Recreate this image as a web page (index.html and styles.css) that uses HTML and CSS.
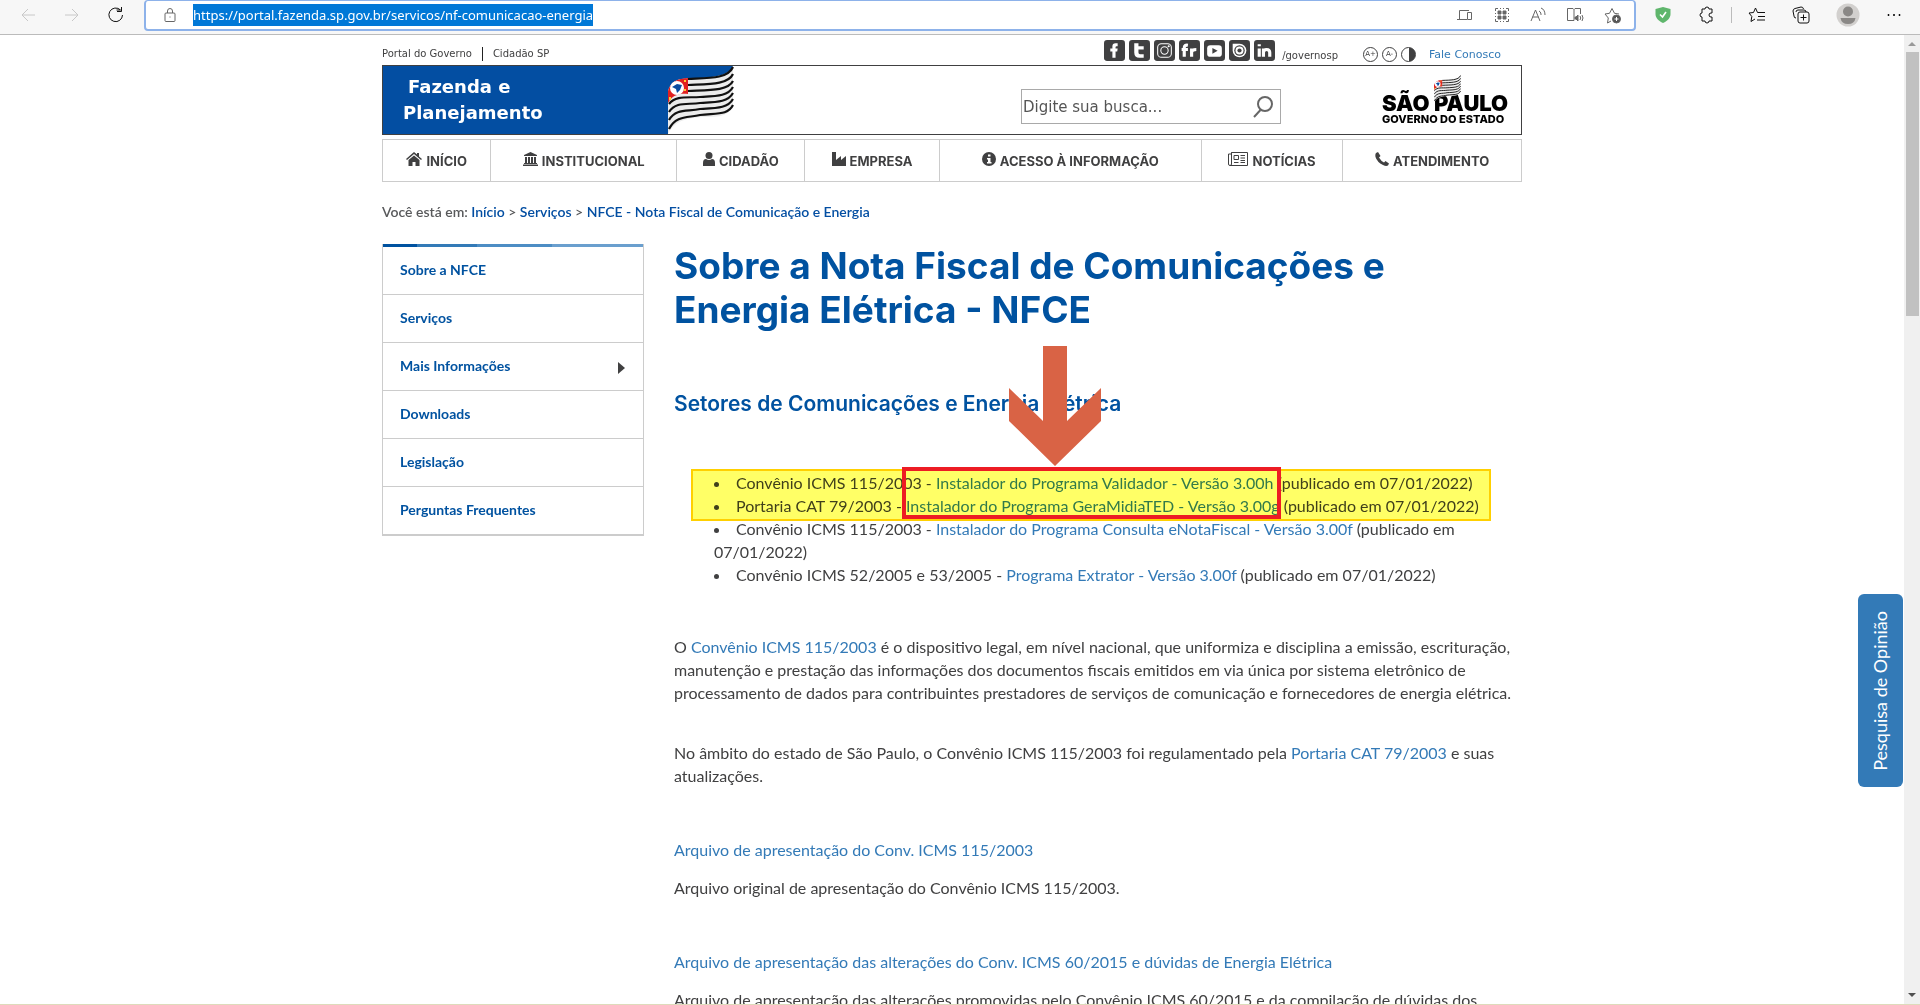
FILE: index.html
```html
<!DOCTYPE html>
<html lang="pt-BR">
<head>
<meta charset="utf-8">
<title>NFCE - Nota Fiscal de Comunicação e Energia</title>
<link rel="stylesheet" href="styles.css">
</head>
<body>
<svg class="defs" width="0" height="0" aria-hidden="true">
  <symbol id="flag" viewBox="0 0 66 68">
    <path d="M0 25C5 9 20 13 35 12 50 11 62 8 65 0V40C58 55 42 49 25 52 10 54 4 60 0 68Z" fill="#ececec"/>
    <g fill="none" stroke="#111" stroke-width="2.200">
      <path d="M20 13C40 12 60 13 65 1"/><path d="M20 19C40 18 60 19 65 8"/><path d="M20 25C40 24 60 25 65 15"/>
      <path d="M1 38C8 29 20 32 32 31 50 30 60 30 65 21"/><path d="M1 46C8 35 20 39 32 37 50 36 60 36 65 27"/>
      <path d="M1 54C8 42 20 46 32 43 50 42 60 42 65 33"/><path d="M1 63C8 49 20 52 32 49 50 47 60 49 65 39"/>
    </g>
    <path d="M0 37V25C4 13 12 13 20 12V28C12 27 4 29 0 37Z" fill="#e02020"/>
    <circle cx="9" cy="22" r="7" fill="#fff"/><path d="M4 21l5-3 5 1-2 5-3 3-1-4z" fill="#0a4ba0"/>
    <path d="M16 14h2v2h-2zM16 23h2v2h-2zM1 31h2v3H1z" fill="#fc3"/>
  </symbol>
</svg>

<header class="browser">
  <div class="nav-buttons">
    <button aria-label="Voltar" disabled><svg width="18" height="18" viewBox="0 0 18 18"><path d="M16 9H3M9 3L3 9l6 6"/></svg></button>
    <button aria-label="Avançar" disabled><svg width="18" height="18" viewBox="0 0 18 18"><path d="M2 9h13M9 3l6 6-6 6"/></svg></button>
    <button aria-label="Atualizar"><svg width="18" height="18" viewBox="0 0 18 18"><path d="M15.500 9a6.800 6.800 0 1 1-2-5H9.500M14.500 1v4.500H10"/></svg></button>
  </div>
  <div class="address">
    <svg class="lock" width="14" height="16" viewBox="0 0 14 16"><rect x="2" y="6" width="10" height="8.500" rx="1"/><path d="M4.500 6V4a2.500 2.500 0 0 1 5 0v2M6.500 10h1"/></svg>
    <div class="url-field"><span class="url">https://portal.fazenda.sp.gov.br/servicos/nf-comunicacao-energia</span></div>
    <div class="address-tools">
      <button aria-label="Enviar para dispositivos"><svg width="18" height="16" viewBox="0 0 18 16"><path d="M13 3.500H3.500V12M1 12.500h10M11.500 5.500h4v7h-4z"/></svg></button>
      <button aria-label="Código QR"><svg width="16" height="16" viewBox="0 0 16 16"><path d="M1.500 4V1.500H4M12 1.500h2.500V4M14.500 12v2.500H12M4 14.500H1.500V12M6 1.500h1M9 1.500h1M6 14.500h1M9 14.500h1M1.500 6v1M1.500 9v1M14.500 6v1M14.500 9v1"/><path d="M4 4h3v3H4zM9 4h3v3H9zM4 9h3v3H4zM9 9h3v3H9z" fill="#666"/></svg></button>
      <button aria-label="Ler em voz alta"><svg width="16" height="16" viewBox="0 0 16 16"><path d="M1 14L5.500 3 10 14M2.500 10h6M9 4c2 1 2 3 2 4M11 1c3 1 4 4 4 7"/></svg></button>
      <button aria-label="Leitor imersivo"><svg width="18" height="16" viewBox="0 0 18 16"><path d="M8 13.500H1.500v-12H7l1 1v11M8 2.500l1-1h5.500V7"/><path d="M9 10h1l2-2v6l-2-2H9z" fill="#666"/><path d="M14 9q1.500 2 0 4M16 8q2 3 0 6"/></svg></button>
      <button aria-label="Adicionar aos favoritos"><svg width="18" height="17" viewBox="0 0 18 17"><path d="M7 14l-3.500 2 .8-5L1 7l4.500-.7L8 1.500l2.500 4.800L15 7"/><circle cx="12.500" cy="12" r="4" fill="#555"/><path d="M10.500 12h4M12.500 10v4" stroke="#fff"/></svg></button>
    </div>
  </div>
  <div class="extensions">
    <button aria-label="Proteção"><svg width="16" height="16" viewBox="0 0 16 16"><path d="M8 0l7.500 2v5c0 4-3 7-7.500 9C3.500 14 .5 11 .5 7V2z" fill="#5fb66c" stroke="none"/><path d="M5 7.500l2.500 2.500L11 5" stroke="#fff" stroke-width="1.600"/></svg></button>
    <button aria-label="Extensões"><svg width="18" height="18" viewBox="0 0 18 18"><path d="M5 3h3a2 2 0 0 1 4 0h3v4h-1a2 2 0 0 0 0 4h1v4h-3a2 2 0 0 1-4 0H5v-4a2 2 0 0 1 0-4z"/></svg></button>
    <span class="divider"></span>
    <button aria-label="Favoritos"><svg width="18" height="18" viewBox="0 0 18 18"><path d="M7 13l-4 2.500.8-5L1 7l4.500-.5L7.500 2l2 4.500h7.500M10 10.500h7M9 14h8"/></svg></button>
    <button aria-label="Coleções"><svg width="18" height="18" viewBox="0 0 18 18"><path d="M4 12q-2 0-2-2L1 5q0-2 2-2.500L9 1q2-.2 2.500 2M4 6q0-2 2-2h6q2 0 2 2"/><rect x="6" y="6" width="11" height="11" rx="2"/><path d="M11.500 8.500v6M8.500 11.500h6"/></svg></button>
    <button aria-label="Perfil"><svg width="24" height="24" viewBox="0 0 24 24"><circle cx="12" cy="12" r="11.500" fill="#d2d0ce" stroke="none"/><circle cx="12" cy="8.500" r="5" fill="#8a8886" stroke="none"/><path d="M4.500 15h15q-1 6-7.500 6t-7.500-6" fill="#8a8886" stroke="none"/></svg></button>
    <button aria-label="Mais opções"><svg width="16" height="6" viewBox="0 0 16 6"><path d="M2 2.500h1v1H2zM7.500 2.500h1v1h-1zM13 2.500h1v1h-1z" fill="#111"/></svg></button>
  </div>
</header>

<div class="viewport">
<div class="page">
<div class="container">
  <div class="topbar">
    <nav class="gov-links"><a href="#">Portal do Governo</a><span class="bar"></span><a href="#">Cidadão SP</a></nav>
    <div class="social">
      <a href="#" aria-label="Facebook"><svg viewBox="0 0 20 20"><rect width="20" height="20" rx="3"/><path class="w" d="M8 17v-6H6V8h2V6q0-3 3-3h2v3h-1q-1 0-1 1v1h2l-.4 3H11v6z"/></svg></a>
      <a href="#" aria-label="Twitter"><svg viewBox="0 0 20 20"><rect width="20" height="20" rx="3"/><path class="w" d="M5 3h4v3h5v3H9v3q0 1.500 1.500 1.500H14V17h-4q-5 0-5-5z"/></svg></a>
      <a href="#" aria-label="Instagram"><svg viewBox="0 0 20 20"><rect width="20" height="20" rx="3"/><rect class="o" x="3.500" y="3.500" width="13" height="13" rx="3.500"/><circle class="o" cx="10" cy="10" r="3.500"/><circle class="w" cx="14" cy="6" r="1"/></svg></a>
      <a href="#" aria-label="Flickr"><svg viewBox="0 0 20 20"><rect width="20" height="20" rx="3"/><path class="o thick" d="M5 16V7.500Q5 4.500 8.500 5M2.500 9h6M12 16V8M12 12q0-3 4.500-3"/></svg></a>
      <a href="#" aria-label="YouTube"><svg viewBox="0 0 20 20"><rect width="20" height="20" rx="3"/><rect class="w" x="3" y="5" width="14" height="11" rx="3"/><path d="M8 7.500v5.500l5-2.700z"/></svg></a>
      <a href="#" aria-label="Issuu"><svg viewBox="0 0 20 20"><rect width="20" height="20" rx="3"/><path class="w" d="M3.500 3.500H10a6.500 6.500 0 1 1-6.500 6.500z"/><circle cx="10" cy="10" r="5"/><circle class="w" cx="10" cy="10" r="3.800"/><circle cx="10" cy="10" r="2"/></svg></a>
      <a href="#" aria-label="LinkedIn"><svg viewBox="0 0 20 20"><rect width="20" height="20" rx="3"/><path class="o thick" d="M5 8v8M9 8v8M9 12q0-3 3-3t3 3v4M5 4v2"/></svg></a>
      <span>/governosp</span>
    </div>
    <div class="access">
      <button aria-label="Aumentar texto">A+</button><button aria-label="Diminuir texto">A-</button><button class="contrast" aria-label="Contraste"></button>
    </div>
    <a class="contact" href="#">Fale Conosco</a>
  </div>

  <div class="banner">
    <div class="brand"><span>Fazenda e</span><span>Planejamento</span></div>
    <svg class="brand-flag" width="66" height="69" viewBox="0 0 66 69"><path d="M0 0H65Q64 14 40 13L12 15Q2 18 0 28Z" fill="#034ea2"/><use href="#flag" width="66" height="68"/></svg>
    <form class="search">
      <input type="text" aria-label="Busca" placeholder="Digite sua busca...">
      <button type="button" aria-label="Buscar"><svg width="20" height="22" viewBox="0 0 20 22"><circle cx="12" cy="8" r="7"/><path d="M7.500 14L1 21"/></svg></button>
    </form>
    <div class="sp-logo"><b>SÃO PAULO</b><strong>GOVERNO DO ESTADO</strong><svg class="logo-flag" width="27" height="28"><use href="#flag"/></svg></div>
  </div>

  <nav class="menu">
    <a href="#"><svg width="16" height="14" viewBox="0 0 16 14"><path d="M0 7l8-7 3 2.600V1h2v3.400L16 7l-1 1-7-6-7 6zM2.500 8L8 3.500 13.500 8v6H9.500v-4h-3v4h-4z"/></svg>INÍCIO</a>
    <a href="#"><svg width="15" height="14" viewBox="0 0 15 14"><path d="M7.500 0L14 3v1H1V3zM2 5h2v6H2zM5 5h2v6H5zM8 5h2v6H8zM11 5h2v6h-2zM1 11h13v1H1zM0 12.500h15V14H0z"/></svg>INSTITUCIONAL</a>
    <a href="#"><svg width="12" height="14" viewBox="0 0 12 14"><circle cx="6" cy="3.500" r="3.500"/><path d="M0 14v-3q0-4 3-4 3 2 6 0 3 0 3 4v3z"/></svg>CIDADÃO</a>
    <a href="#"><svg width="14" height="14" viewBox="0 0 14 14"><path d="M0 14V0h4v8l5-4v4l5-4v10z"/></svg>EMPRESA</a>
    <a href="#"><svg width="14" height="14" viewBox="0 0 14 14"><circle cx="7" cy="7" r="7"/><path d="M6 2.500h2.500v2H6zM5 6h3.500v4h1v1.500H5V10h1V7.500H5z" fill="#fff"/></svg>ACESSO À INFORMAÇÃO</a>
    <a href="#"><svg width="20" height="14" viewBox="0 0 20 14"><path d="M3.500.5h16v13H2Q.5 13.500.5 12V2H3.500zV12q0 1.500-1.500 1.500M6 3.500h4.500v4H6zM12.500 3.500H17M12.500 6H17M12.500 8.500H17M6 10.500h4.500M12.500 10.500H17" fill="none" stroke="#404041"/></svg>NOTÍCIAS</a>
    <a href="#"><svg width="14" height="14" viewBox="0 0 14 14"><path d="M1 1L3 0 5.500 4 4 5.500Q6 9 9 10.500L10.500 9 14 11.500 13 13.500Q11 14.500 8 13 2 10 .5 5 0 2 1 1"/></svg>ATENDIMENTO</a>
  </nav>

  <nav class="crumbs">Você está em: <a href="#">Início</a> &gt; <a href="#">Serviços</a> &gt; <a href="#">NFCE - Nota Fiscal de Comunicação e Energia</a></nav>

  <div class="columns">
    <nav class="sidebar">
      <a href="#">Sobre a NFCE</a><a href="#">Serviços</a><a class="has-sub" href="#">Mais Informações</a><a href="#">Downloads</a><a href="#">Legislação</a><a href="#">Perguntas Frequentes</a>
    </nav>
    <main>
      <h1>Sobre a Nota Fiscal de Comunicações e Energia Elétrica - NFCE</h1>
      <h2>Setores de Comunicações e Energia Elétrica</h2>
      <div class="downloads">
        <ul>
          <li>Convênio ICMS 115/2003 - <a href="#">Instalador do Programa Validador - Versão 3.00h</a> (publicado em 07/01/2022)</li>
          <li>Portaria CAT 79/2003 - <a href="#">Instalador do Programa GeraMidiaTED - Versão 3.00g</a> (publicado em 07/01/2022)</li>
          <li>Convênio ICMS 115/2003 - <a href="#">Instalador do Programa Consulta eNotaFiscal - Versão 3.00f</a> (publicado em 07/01/2022)</li>
          <li>Convênio ICMS 52/2005 e 53/2005 - <a href="#">Programa Extrator - Versão 3.00f</a> (publicado em 07/01/2022)</li>
        </ul>
        <div class="highlight"></div>
        <div class="frame"></div>
        <svg class="arrow" width="94" height="120" viewBox="0 0 94 120"><path d="M35 0H59V75L93 42V75L47 120 1 75V42L35 75Z" fill="#d96345"/></svg>
      </div>
      <p>O <a href="#">Convênio ICMS 115/2003</a> é o dispositivo legal, em nível nacional, que uniformiza e disciplina a emissão, escrituração, manutenção e prestação das informações dos documentos fiscais emitidos em via única por sistema eletrônico de processamento de dados para contribuintes prestadores de serviços de comunicação e fornecedores de energia elétrica.</p>
      <p>No âmbito do estado de São Paulo, o Convênio ICMS 115/2003 foi regulamentado pela <a href="#">Portaria CAT 79/2003</a> e suas atualizações.</p>
      <section>
        <a href="#">Arquivo de apresentação do Conv. ICMS 115/2003</a>
        <span>Arquivo original de apresentação do Convênio ICMS 115/2003.</span>
      </section>
      <section>
        <a href="#">Arquivo de apresentação das alterações do Conv. ICMS 60/2015 e dúvidas de Energia Elétrica</a>
        <span>Arquivo de apresentação das alterações promovidas pelo Convênio ICMS 60/2015 e da compilação de dúvidas dos</span>
      </section>
    </main>
  </div>
</div>
<button class="survey">Pesquisa de Opinião</button>
</div>
<div class="scrollbar"><span class="up"></span><span class="thumb"></span><span class="down"></span></div>
</div>
</body>
</html>
```
FILE: styles.css
```css
* { box-sizing: border-box; }
body {
  margin: 0;
  height: 100vh;
  display: flex;
  flex-direction: column;
  overflow: hidden;
  background: #fff;
  color: #404041;
  font: 16px/23px Lato, "Open Sans", sans-serif;
}
a { color: #337ab7; text-decoration: none; }
button { padding: 0; border: 0; background: none; color: inherit; font: inherit; }
.defs { position: absolute; }

/* browser toolbar */
.browser {
  flex: none;
  display: flex;
  height: 35px;
  background: #f7f7f7;
  border-bottom: 1px solid #bbb;
}
.browser svg { display: block; fill: none; stroke: #111; }
.nav-buttons { display: flex; align-items: center; gap: 26px; width: 144px; padding: 0 0 4px 19px; }
.nav-buttons button:disabled svg { stroke: #c8c8c8; }
.address {
  flex: 1;
  display: flex;
  align-items: center;
  height: 31px;
  padding: 0 12px 0 17px;
  background: #fff;
  border: 2px solid #8db2ea;
  border-top-width: 1px;
  border-radius: 4px;
}
.address svg { stroke: #666; }
.url-field { flex: 1; padding-left: 16px; font: 13px/22px "Noto Sans", sans-serif; }
.url { display: inline-block; color: #fff; background: #0078d7; }
.address-tools { display: flex; gap: 20px; }
.extensions { display: flex; align-items: center; gap: 26px; width: 284px; padding: 0 0 4px 19px; }
.divider { width: 1px; height: 16px; margin: 0 -10px; background: #bbb; }

/* document area */
.viewport { flex: 1; min-height: 0; display: flex; border-bottom: 1px solid #dedbbb; }
.page { flex: 1; position: relative; overflow: hidden; }
.container { max-width: 1140px; margin: 0 auto; }
.topbar {
  display: flex;
  align-items: center;
  height: 30px;
  padding-right: 21px;
  font: 10px/14px "DejaVu Sans", sans-serif;
}
.gov-links { flex: 1; display: flex; align-items: center; padding-top: 8px; }
.gov-links a { color: #404041; }
.bar { width: 1px; height: 14px; margin: 0 10px; background: #222; }
.social { display: flex; gap: 4px; align-items: flex-end; }
.social svg { display: block; width: 21px; height: 21px; fill: #404041; }
.social .w { fill: #fff; }
.social .o { fill: none; stroke: #fff; }
.social .thick { stroke-width: 3; }
.social span { padding-left: 3px; margin-bottom: -2px; }
.access { display: flex; gap: 4px; padding: 8px 13px 0 25px; }
.access button { width: 15px; height: 15px; border: 1px solid #404041; border-radius: 50%; font-size: 7px; line-height: 12px; }
.access .contrast { background: linear-gradient(90deg, #fff 50%, #404041 50%); }
.contact { padding-top: 10px; font-size: 11px; }

.banner { position: relative; display: flex; align-items: center; height: 70px; border: 1px solid #404041; }
.brand {
  align-self: stretch;
  flex: none;
  width: 285px;
  padding: 8px 20px;
  background: #034ea2;
  color: #fff;
  font: bold 18px/26px "DejaVu Sans", sans-serif;
}
.brand span { display: block; }
.brand span:first-child { padding-left: 5px; }
.brand-flag { flex: none; }
.search { display: flex; align-items: center; width: 260px; height: 35px; margin: 13px 101px 0 auto; border: 1px solid #a9a9a9; }
.search input { flex: 1; min-width: 0; padding: 0 1px; border: 0; outline: 0; color: #444; font: 15px/20px "DejaVu Sans", sans-serif; }
.search input::placeholder { color: #555; }
.search button { width: 34px; height: 22px; }
.search svg { fill: none; stroke: #666; stroke-width: 2; }
.sp-logo { position: relative; width: 125px; margin-right: 14px; padding-top: 18px; color: #000; }
.sp-logo b, .sp-logo strong { display: block; white-space: nowrap; font-family: Inter, sans-serif; }
.sp-logo b { font-size: 22px; line-height: 20px; font-weight: 900; }
.sp-logo strong { font-size: 11px; line-height: 12px; font-weight: 800; }
.logo-flag { position: absolute; left: 52px; top: 0; }

.menu { display: flex; height: 43px; margin-top: 4px; border: 1px solid #ccc; }
.menu a {
  flex: 108 1 0;
  display: flex;
  align-items: center;
  justify-content: center;
  gap: 4px;
  border-left: 1px solid #ccc;
  color: #404041;
  font: 700 13px/20px Inter, sans-serif;
}
.menu a:first-child { border-left: 0; }
.menu a:nth-child(2) { flex-grow: 186; }
.menu a:nth-child(3) { flex-grow: 128; }
.menu a:nth-child(4) { flex-grow: 134; }
.menu a:nth-child(5) { flex-grow: 263; }
.menu a:nth-child(6) { flex-grow: 141; }
.menu a:nth-child(7) { flex-grow: 179; }
.menu svg { flex: none; fill: #404041; margin-bottom: 4px; }

.crumbs { padding-top: 18px; font-size: 14px; line-height: 24px; font-weight: 600; color: #58595b; }
.crumbs a { color: #034ea2; }

.columns { display: flex; gap: 30px; padding-top: 20px; }
.sidebar {
  align-self: flex-start;
  flex: none;
  width: 262px;
  border: 1px solid #ccc;
  border-top: 0;
  border-bottom-width: 2px;
}
.sidebar::before {
  content: "";
  display: block;
  height: 3px;
  background: linear-gradient(90deg, #0052a0 0 13%, #337ab7 13% 36%, #4d8dc4 36% 65%, #6a9fce 65%);
}
.sidebar a { display: block; height: 48px; padding-left: 17px; border-bottom: 1px solid #ccc; color: #0052a0; font-weight: bold; font-size: 14px; line-height: 46px; }
.sidebar a:last-child { height: 47px; border-bottom: 0; }
.has-sub { position: relative; }
.has-sub::after {
  content: "";
  position: absolute;
  right: 18px;
  top: 19px;
  border-left: 7px solid #404041;
  border-top: 6px solid transparent;
  border-bottom: 6px solid transparent;
}

main { flex: 1; min-width: 0; }
h1, h2 { margin: 0; color: #0052a0; font-family: Inter, sans-serif; font-weight: 700; }
h1 { max-width: 760px; font-size: 37px; line-height: 44px; }
h2 { margin: 60px 0 55px; font-size: 21px; line-height: 24px; font-weight: 600; }
main p { margin: 0 0 37px; }
.downloads { position: relative; margin-bottom: 49px; }
.downloads ul { margin: 0; padding-left: 40px; list-style-position: inside; }
.highlight { position: absolute; left: 17px; top: -2px; width: 800px; height: 52px; background: #ffff66; border: 2px solid #ffd000; mix-blend-mode: multiply; }
.frame { position: absolute; left: 228px; top: -4px; width: 379px; height: 52px; border: 4px solid #ed1c24; }
.arrow { position: absolute; left: 334px; top: -125px; }
main section { display: flex; flex-direction: column; gap: 15px; padding-top: 14px; margin-bottom: 37px; }

.survey {
  position: absolute;
  right: 1px;
  top: 559px;
  width: 45px;
  height: 193px;
  border-radius: 6px;
  background: #337ab7;
  color: #fff;
  font-size: 18px;
  writing-mode: sideways-lr;
}
.scrollbar { flex: none; display: flex; flex-direction: column; align-items: center; width: 16px; padding: 7px 0; background: #f0f0f0; }
.up { border: 4px solid transparent; border-top: 0; border-bottom-color: #999; }
.thumb { width: 13px; height: 264px; margin-top: 6px; background: #c1c1c1; }
.down { margin-top: auto; border: 4px solid transparent; border-bottom: 0; border-top-color: #505050; }
```
